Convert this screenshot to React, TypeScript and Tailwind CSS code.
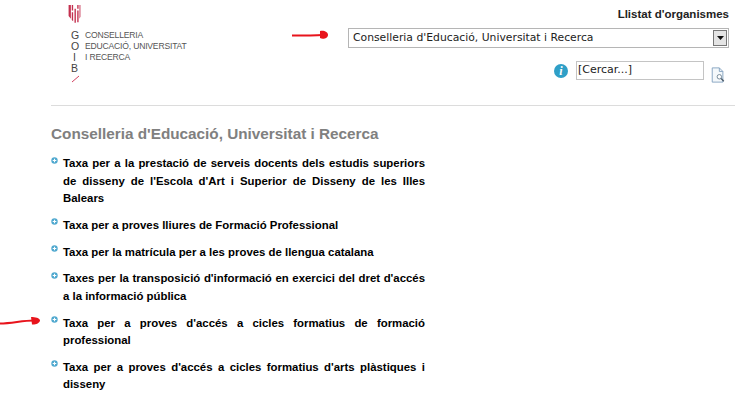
import React from "react";

const items = [
  "Taxa per a la prestació de serveis docents dels estudis superiors de disseny de l'Escola d'Art i Superior de Disseny de les Illes Balears",
  "Taxa per a proves lliures de Formació Professional",
  "Taxa per la matrícula per a les proves de llengua catalana",
  "Taxes per la transposició d'informació en exercici del dret d'accés a la informació pública",
  "Taxa per a proves d'accés a cicles formatius de formació professional",
  "Taxa per a proves d'accés a cicles formatius d'arts plàstiques i disseny",
];

const Bullet: React.FC = () => (
  <svg width="7" height="7" viewBox="0 0 7 7" className="mt-[1.5px] shrink-0">
    <circle cx="3.5" cy="3.5" r="3.2" fill="#4fa8cf" />
    <path d="M3.5 1.7v3.6M1.7 3.5h3.6" stroke="#fff" strokeWidth="1.1" />
  </svg>
);

const Logo: React.FC = () => (
  <div className="flex w-[130px] flex-col">
    <svg width="13" height="20" viewBox="0 0 13 22" className="ml-[17px] mt-[5px]">
      <path d="M0 0h2.5v15l-2.5-3zM3.5 0H5v6H3.5zM3.5 8H5v10l-1.5-1.5zM6.5 4H8v15.5H6.5zM9.5 0H11v4H9.5zM9.5 6H11v13H9.5zM12 0h1v13l-1 2z" fill="#c4304f" />
    </svg>
    <div className="mt-[5px] flex">
      <div className="ml-[20px] flex w-[14px] shrink-0 flex-col font-['Liberation_Sans',sans-serif] text-[10.5px] leading-[11px] text-[#444]">
        <span>G</span>
        <span>O</span>
        <span className="pl-[2px]">I</span>
        <span>B</span>
        <svg width="9" height="9" viewBox="0 0 9 9">
          <path d="M1 8L8 2" stroke="#d2405f" strokeWidth="1" />
        </svg>
      </div>
      <div className="whitespace-nowrap font-['Liberation_Sans',sans-serif] text-[8.6px] leading-[10.8px] tracking-[-0.2px] text-[#555]">
        <div>CONSELLERIA</div>
        <div>EDUCACIÓ, UNIVERSITAT</div>
        <div>I RECERCA</div>
      </div>
    </div>
  </div>
);

const Header: React.FC = () => (
  <div className="flex h-[106px] justify-between border-b border-[#dcdcdc] pr-[6px]">
    <Logo />
    <div className="flex w-[381px] flex-col items-end">
      <div className="mt-[7px] font-['Liberation_Sans',sans-serif] text-[11.5px] font-bold leading-[14px] text-[#222]">
        Llistat d'organismes
      </div>
      <div className="mt-[7px] flex h-[20px] w-full items-center justify-between border border-[#b5b5b5] pl-[4px] pr-[1px] font-['DejaVu_Sans',sans-serif] text-[10.8px] text-[#222]">
        <span className="pt-[1px]">Conselleria d'Educació, Universitat i Recerca</span>
        <div className="flex h-[16px] w-[14px] items-center justify-center border border-[#777] bg-[#e4e4e4]">
          <svg width="7" height="4" viewBox="0 0 7 4">
            <path d="M0 0h7L3.5 4z" fill="#111" />
          </svg>
        </div>
      </div>
      <div className="mt-[13px] flex items-start pr-[3px]">
        <div className="mt-[3px] flex h-[14px] w-[14px] items-center justify-center rounded-full bg-[#2f9fc7] font-['Liberation_Serif',serif] text-[12px] font-bold italic leading-none text-white">
          i
        </div>
        <div className="ml-[8px] flex h-[19px] w-[128px] items-center border border-[#c4c4c4] pl-[1px] font-['DejaVu_Sans',sans-serif] text-[11px] text-[#222]">
          [Cercar...]
        </div>
        <svg width="16" height="16" viewBox="0 0 16 18" className="ml-[6px] mt-[6px]">
          <path d="M1.5 1h8l4 4v12h-12z" fill="#f4f8fb" stroke="#7f9fbd" />
          <path d="M9.5 1v4h4" fill="none" stroke="#7f9fbd" />
          <circle cx="9.5" cy="11" r="2.5" fill="#fff" stroke="#6a7f90" />
          <path d="M11.5 13l3 3" stroke="#4a5a68" strokeWidth="1.5" />
        </svg>
      </div>
    </div>
  </div>
);

export default function App() {
  return (
    <div className="relative h-[406px] w-[735px] overflow-hidden bg-white pl-[51px]">
      <Header />
      <h1 className="mt-[19px] font-['Liberation_Sans',sans-serif] text-[15.3px] font-bold leading-[18px] text-[#808080]">
        Conselleria d'Educació, Universitat i Recerca
      </h1>
      <ul className="mt-[12px] w-[374px]">
        {items.map((item) => (
          <li key={item} className="mb-[9.3px] flex gap-[5px]">
            <Bullet />
            <p className="text-justify font-['Liberation_Sans',sans-serif] text-[11.4px] font-bold leading-[17.5px] text-black">
              {item}
            </p>
          </li>
        ))}
      </ul>
      <svg width="40" height="14" viewBox="0 0 40 14" className="absolute left-[291px] top-[29px]">
        <path d="M1 6.5C12 6.5 22 6.5 32 6" stroke="#e8141c" strokeWidth="2" fill="none" />
        <path d="M29 2c4-1 8 1 8 4s-5 5-8 3z" fill="#e8141c" />
      </svg>
      <svg width="42" height="14" viewBox="0 0 42 14" className="absolute left-0 top-[315px]">
        <path d="M0 8.5C12 8.5 22 5.5 34 5.5" stroke="#e8141c" strokeWidth="2" fill="none" />
        <path d="M31 2c4 0 9 1 9 3.5s-5 4.5-8 4z" fill="#e8141c" />
      </svg>
    </div>
  );
}
